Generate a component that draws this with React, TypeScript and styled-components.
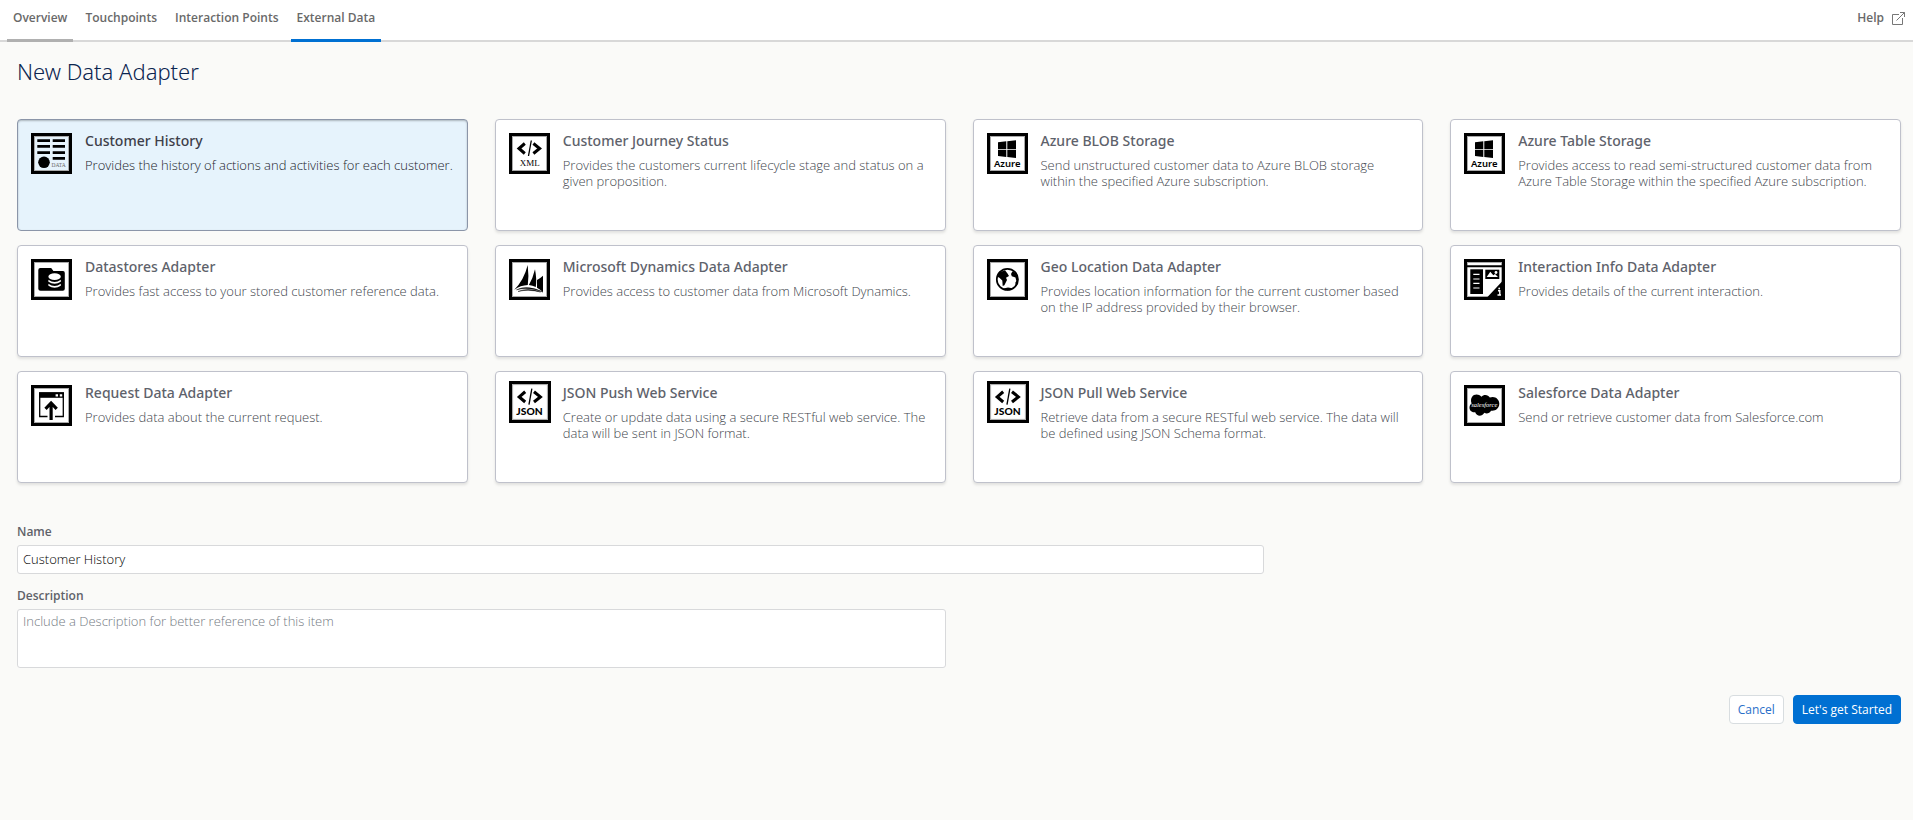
import React, { useState } from 'react';
import styled, { createGlobalStyle } from 'styled-components';

const GlobalStyle = createGlobalStyle`
  *, *::before, *::after { box-sizing: border-box; }
  body {
    margin: 0;
    background: #fafaf8;
    color: #54575e;
    font-family: "Open Sans", "Noto Sans", sans-serif;
    font-size: 13px;
    font-weight: 300;
    line-height: 16px;
  }
  h1, h2, p { margin: 0; }
  button, input, textarea { font: inherit; }
`;

const TopBar = styled.header`
  display: flex;
  justify-content: space-between;
  height: 42px;
  padding: 0 8px 0 7px;
  background: #fff;
  border-bottom: 2px solid #d8d8d8;
`;

const Tabs = styled.nav`
  display: flex;
  gap: 6px;
`;

const Tab = styled.a<{ $line?: string }>`
  height: 42px;
  padding: 10px 6px 0;
  border-bottom: 3px solid ${(p) => p.$line ?? 'transparent'};
  color: #696969;
  font-size: 12px;
  font-weight: 600;
  text-decoration: none;
`;

const HelpLink = styled.a`
  display: flex;
  align-items: flex-start;
  gap: 8px;
  padding-top: 10px;
  color: #696969;
  font-size: 12px;
  font-weight: 600;
  text-decoration: none;

  svg { margin-top: 2px; }
`;

const Page = styled.main`
  padding: 13px 12px 24px 17px;
`;

const PageTitle = styled.h1`
  color: #0b2550;
  font-family: "Noto Sans", sans-serif;
  font-size: 22px;
  font-weight: 300;
  line-height: 32px;
`;

const AdapterGrid = styled.div`
  display: grid;
  grid-template-columns: repeat(4, minmax(0, 1fr));
  gap: 14px 27px;
  margin-top: 32px;
`;

const Card = styled.button<{ $selected: boolean }>`
  display: flex;
  align-items: flex-start;
  gap: 13px;
  min-height: 112px;
  padding: 13px 12px 13px 13px;
  border: 1px solid ${(p) => (p.$selected ? '#8b95a8' : '#bfc1cb')};
  border-radius: 4px;
  background: ${(p) => (p.$selected ? '#e6f3fc' : '#fff')};
  box-shadow: ${(p) =>
    p.$selected ? 'inset 0 1px 2px rgba(0, 0, 0, 0.25)' : '0 2px 3px rgba(0, 0, 0, 0.1)'};
  color: ${(p) => (p.$selected ? '#22232b' : '#42464d')};
  text-align: left;
  cursor: pointer;
`;

const IconSlot = styled.span<{ $raised?: boolean }>`
  display: block;
  flex: 0 0 41px;
  width: 41px;
  margin-top: ${(p) => (p.$raised ? '-4px' : '0')};

  svg { display: block; overflow: visible; }
`;

const CardText = styled.span`
  display: flex;
  flex-direction: column;
  gap: 8px;
  min-width: 0;
`;

const CardTitle = styled.span<{ $selected: boolean }>`
  color: ${(p) => (p.$selected ? '#3e3f4a' : '#5e626b')};
  font-family: "Noto Sans", sans-serif;
  font-size: 14px;
  font-weight: 500;
`;

const CardDescription = styled.span``;

const Form = styled.form`
  display: flex;
  flex-direction: column;
  margin-top: 40px;
`;

const Field = styled.div<{ $width: string }>`
  display: flex;
  flex-direction: column;
  gap: 4px;
  width: ${(p) => p.$width};
  margin-bottom: 13px;
`;

const Label = styled.label`
  color: #5f6269;
  font-size: 12px;
  font-weight: 600;
  line-height: 18px;
`;

const TextInput = styled.input`
  height: 29px;
  padding: 0 5px 1px;
  border: 1px solid #d8d9db;
  border-radius: 3px;
  background: #fff;
  color: #000;
`;

const TextArea = styled.textarea`
  height: 59px;
  padding: 3px 5px;
  border: 1px solid #d8d9db;
  border-radius: 3px;
  background: #fff;
  color: #000;
  resize: none;

  &::placeholder { color: #757b83; opacity: 1; }
`;

const Actions = styled.div`
  display: flex;
  justify-content: flex-end;
  gap: 9px;
  margin-top: 14px;
`;

const ActionButton = styled.button<{ $primary?: boolean }>`
  height: 29px;
  padding: 0 8px;
  border: 1px solid ${(p) => (p.$primary ? '#0070d2' : '#d8dde0')};
  border-radius: 4px;
  background: ${(p) => (p.$primary ? '#0070d2' : '#fff')};
  color: ${(p) => (p.$primary ? '#fff' : '#2a6fc9')};
  font-size: 12px;
  font-weight: 400;
  cursor: pointer;
`;

function Frame({ children, size = 41 }: { children: React.ReactNode; size?: number }) {
  return (
    <svg width={size} height={size} viewBox="0 0 41 41" aria-hidden="true">
      <rect x="1.5" y="1.5" width="38" height="38" fill="none" stroke="#000" strokeWidth="3" />
      <rect x="3.5" y="3.5" width="34" height="34" fill="none" stroke="#aaa" strokeWidth="1" />
      {children}
    </svg>
  );
}

const HistoryIcon = () => (
  <Frame>
    <path d="M6.3 7.7H19M6.3 13.4H19M6.3 19.6H19M21.7 7.7H34M21.7 13.4H34M21.7 19.6H34M21.7 25.4H34" stroke="#000" strokeWidth="2.7" />
    <circle cx="13" cy="29.3" r="5.8" />
    <text x="20.5" y="34" fontFamily="Liberation Serif, serif" fontSize="5.5" fill="#666">DATA</text>
  </Frame>
);

const CodeGlyph = () => (
  <>
    <path d="M15.8 10.5L10 15.5L15.8 20.5M24.4 10.5L30.6 15.5L24.4 20.5" fill="none" stroke="#000" strokeWidth="3" />
    <path d="M22.3 7.5L19.5 23" stroke="#000" strokeWidth="1.3" />
  </>
);

const XmlIcon = () => (
  <Frame>
    <CodeGlyph />
    <text x="20.7" y="32.7" textAnchor="middle" fontFamily="Liberation Serif, serif" fontSize="9">XML</text>
  </Frame>
);

const JsonIcon = () => (
  <Frame size={42}>
    <CodeGlyph />
    <text x="20" y="33" textAnchor="middle" fontFamily="Lato, sans-serif" fontWeight="900" fontSize="10">JSON</text>
  </Frame>
);

const AzureIcon = () => (
  <Frame>
    <path d="M11 9.3L19.3 8.3V16H11zM20.3 8.2L29 7.2V16H20.3zM11 16.8H19.3V24L11 23zM20.3 16.8H29V25L20.3 24z" />
    <text x="20.2" y="34" textAnchor="middle" fontFamily="Noto Sans, sans-serif" fontWeight="600" fontSize="9.5">Azure</text>
  </Frame>
);

const DatastoreIcon = () => (
  <Frame>
    <path d="M9.3 9H20.2L22.4 12H32Q33.8 12 33.8 14V29.7Q33.8 31.8 31.8 31.8H9.5Q7.3 31.8 7.3 29.7V11Q7.3 9 9.3 9z" />
    <ellipse cx="23.6" cy="17.7" rx="6.2" ry="3.4" fill="#fff" />
    <path d="M17.4 20.7Q23.6 25.3 29.8 20.7V22.7Q23.6 27 17.4 22.7zM17.4 24.7Q23.6 29.3 29.8 24.7V26.7Q23.6 31 17.4 26.7z" fill="#fff" />
  </Frame>
);

const DynamicsIcon = () => (
  <Frame>
    <path d="M18.7 6Q20 17 18.8 26Q11.5 26.3 5.3 30.7Q15 21 18.7 6zM26 10.3Q27.9 20 26.8 28Q23.5 26.5 19.9 26Q24 19 26 10.3zM34 16.7V33Q30.6 30 28 28.7V21Q31 19.5 34 16.7z" />
    <path d="M7.5 30.8Q18 25.5 34 33Q18 27.5 7.5 30.8zM9 32.5Q19 28.5 31.5 33Q19 29.9 9 32.5z" stroke="#000" strokeWidth="0.4" />
  </Frame>
);

const GlobeIcon = () => (
  <Frame>
    <circle cx="20.4" cy="20.4" r="10.6" fill="none" stroke="#000" strokeWidth="1.7" />
    <path d="M12 13.6L18 11.3L20.5 14.5L22 17L19 18.8L20 21L17.4 26.2L15.7 27L15.3 21.4L12.4 18.8L10.5 17.8zM25.3 12.6L29 13.7L31 18V24L28.8 27L28.3 23.7L29.3 22L28.5 18.5L24.8 17.3L24 15zM16.5 29.5L21 28.5L24 29L26 30L20.4 31.4z" />
  </Frame>
);

const InteractionIcon = () => (
  <Frame>
    <path d="M3 6.8H38M3 7.6H38" stroke="#000" strokeWidth="1.2" />
    <rect x="6.3" y="10.3" width="12.7" height="24.7" />
    <path d="M9.3 15.4H15.5M9.3 20H15.5M9.3 24.4H15.5M9.3 29H15.5" stroke="#fff" strokeWidth="1.2" />
    <rect x="21.3" y="10.7" width="14" height="9.3" />
    <path d="M22.7 18L26.3 12.7L29.3 16.2L31 15L34 18z" fill="#fff" />
    <circle cx="32" cy="13.5" r="1.4" fill="#fff" />
    <path d="M23 38.5L38.5 22V38.5z" />
    <path d="M34 31.8H35.8V36M33.5 36H37" fill="none" stroke="#fff" strokeWidth="1.4" />
    <circle cx="35.2" cy="29.5" r="0.9" fill="#fff" />
  </Frame>
);

const RequestIcon = () => (
  <Frame>
    <path d="M16.5 31.5H8.7V8H32.3V31.5H24" fill="none" stroke="#000" strokeWidth="1.3" />
    <path d="M8 7.4H33V12.8H8z" />
    <path d="M24.6 9.2H27V11.5H24.6zM28.8 9.2H31.2V11.5H28.8z" fill="#fff" />
    <path d="M20.1 35V18.5M14.5 23.8L20.1 18L25.7 23.8" fill="none" stroke="#000" strokeWidth="3.2" />
  </Frame>
);

const SalesforceIcon = () => (
  <Frame>
    <path d="M17.5 11.8C19.5 9.2 24.2 9.4 25.8 12.6C30.5 10.5 35.3 13.9 35.3 18.6C35.3 23.8 30.9 26.5 27 25.7C25.6 28.4 22.6 29 20.4 27.8C17.5 32.3 12.5 31 11.2 27.2C7.3 27.8 5.3 24.8 5.5 22.2C5.7 20.5 6.4 19.3 7.6 18.5C4.8 10.5 12.9 7 17.5 11.8z" />
    <text x="20.3" y="21.5" textAnchor="middle" fill="#fff" fontFamily="Liberation Serif, serif" fontStyle="italic" fontSize="6.5">salesforce</text>
  </Frame>
);

const ExternalIcon = () => (
  <svg width="13" height="13" viewBox="0 0 13 13" fill="none" stroke="#777" aria-hidden="true">
    <path d="M7 2.5H.5V12.5H10.5V6M8 .5H12.5V5M12.5 .5L4.5 8.5" />
  </svg>
);

type Adapter = {
  title: string;
  text: string;
  icon: () => React.JSX.Element;
  raised?: boolean;
};

const adapters: Adapter[] = [
  { title: 'Customer History', text: 'Provides the history of actions and activities for each customer.', icon: HistoryIcon },
  { title: 'Customer Journey Status', text: 'Provides the customers current lifecycle stage and status on a given proposition.', icon: XmlIcon },
  { title: 'Azure BLOB Storage', text: 'Send unstructured customer data to Azure BLOB storage within the specified Azure subscription.', icon: AzureIcon },
  { title: 'Azure Table Storage', text: 'Provides access to read semi-structured customer data from Azure Table Storage within the specified Azure subscription.', icon: AzureIcon },
  { title: 'Datastores Adapter', text: 'Provides fast access to your stored customer reference data.', icon: DatastoreIcon },
  { title: 'Microsoft Dynamics Data Adapter', text: 'Provides access to customer data from Microsoft Dynamics.', icon: DynamicsIcon },
  { title: 'Geo Location Data Adapter', text: 'Provides location information for the current customer based on the IP address provided by their browser.', icon: GlobeIcon },
  { title: 'Interaction Info Data Adapter', text: 'Provides details of the current interaction.', icon: InteractionIcon },
  { title: 'Request Data Adapter', text: 'Provides data about the current request.', icon: RequestIcon },
  { title: 'JSON Push Web Service', text: 'Create or update data using a secure RESTful web service. The data will be sent in JSON format.', icon: JsonIcon, raised: true },
  { title: 'JSON Pull Web Service', text: 'Retrieve data from a secure RESTful web service. The data will be defined using JSON Schema format.', icon: JsonIcon, raised: true },
  { title: 'Salesforce Data Adapter', text: 'Send or retrieve customer data from Salesforce.com', icon: SalesforceIcon },
];

export default function App() {
  const [selected, setSelected] = useState(adapters[0].title);
  const [name, setName] = useState(adapters[0].title);

  const choose = (title: string) => {
    setSelected(title);
    setName(title);
  };

  return (
    <>
      <GlobalStyle />
      <TopBar>
        <Tabs>
          <Tab href="#overview" $line="#b0b0b0">Overview</Tab>
          <Tab href="#touchpoints">Touchpoints</Tab>
          <Tab href="#interaction-points">Interaction Points</Tab>
          <Tab href="#external-data" $line="#0070d2" aria-current="page">External Data</Tab>
        </Tabs>
        <HelpLink href="#help">
          Help
          <ExternalIcon />
        </HelpLink>
      </TopBar>
      <Page>
        <PageTitle>New Data Adapter</PageTitle>
        <AdapterGrid>
          {adapters.map(({ title, text, icon: Icon, raised }) => (
            <Card
              key={title}
              type="button"
              $selected={title === selected}
              aria-pressed={title === selected}
              onClick={() => choose(title)}
            >
              <IconSlot $raised={raised}>
                <Icon />
              </IconSlot>
              <CardText>
                <CardTitle $selected={title === selected}>{title}</CardTitle>
                <CardDescription>{text}</CardDescription>
              </CardText>
            </Card>
          ))}
        </AdapterGrid>
        <Form onSubmit={(e) => e.preventDefault()}>
          <Field $width="66.2%">
            <Label htmlFor="name">Name</Label>
            <TextInput id="name" value={name} onChange={(e) => setName(e.target.value)} />
          </Field>
          <Field $width="49.3%">
            <Label htmlFor="description">Description</Label>
            <TextArea id="description" placeholder="Include a Description for better reference of this item" />
          </Field>
          <Actions>
            <ActionButton type="button">Cancel</ActionButton>
            <ActionButton type="submit" $primary>Let's get Started</ActionButton>
          </Actions>
        </Form>
      </Page>
    </>
  );
}
